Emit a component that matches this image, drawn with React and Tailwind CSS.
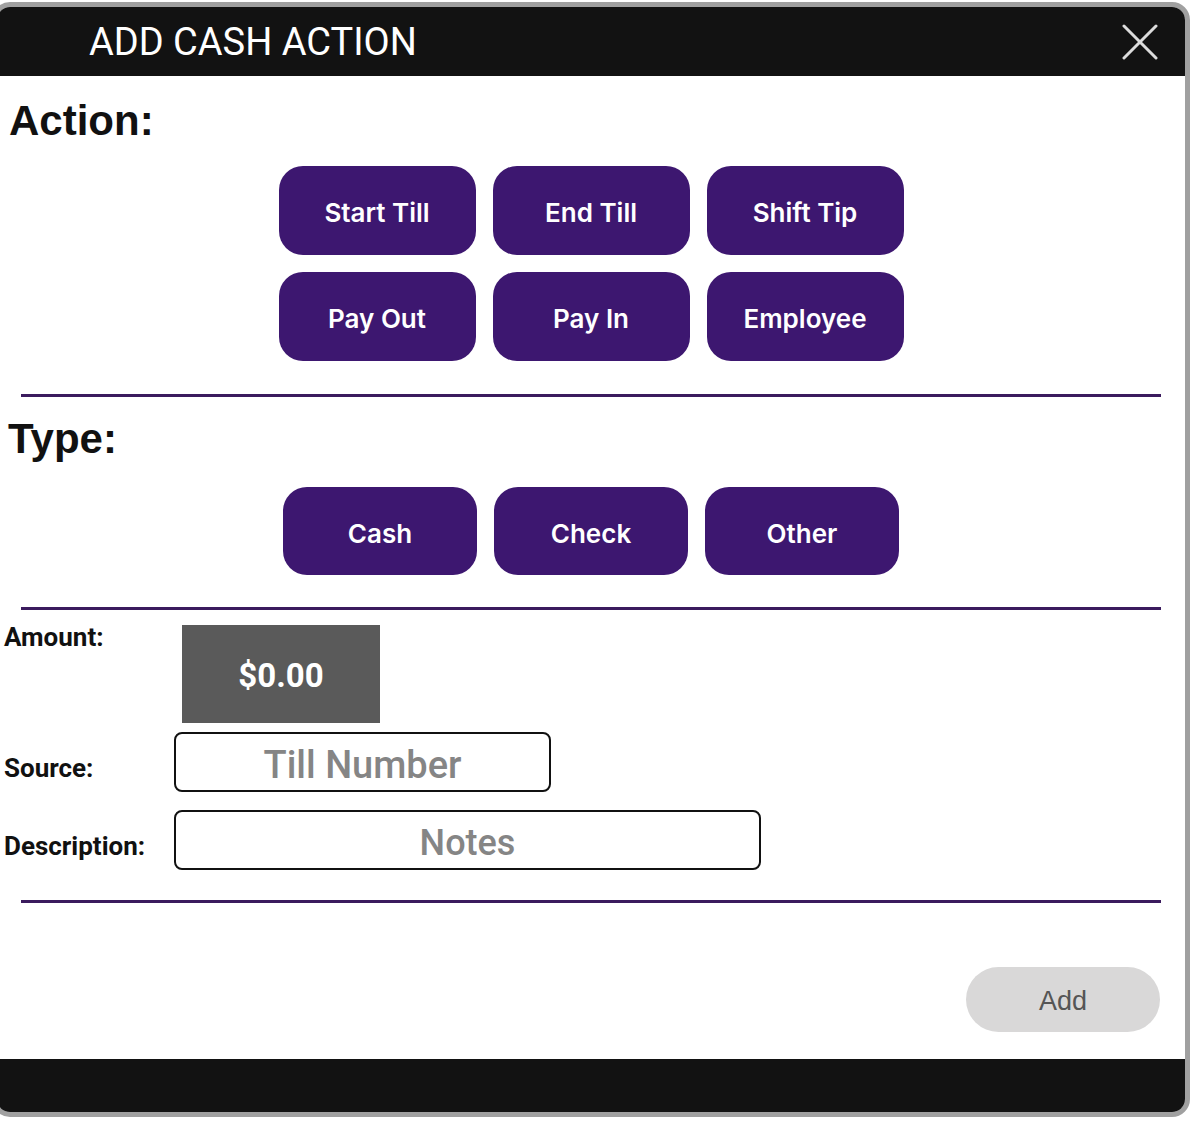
import { useState } from "react";

const ACTIONS = ["Start Till", "End Till", "Shift Tip", "Pay Out", "Pay In", "Employee"];
const TYPES = ["Cash", "Check", "Other"];

function Divider({ className = "" }) {
  return <div className={`mx-[24px] h-[3px] bg-[#3b1b5e] ${className}`} />;
}

function PurpleButton({ label, wide, onClick }) {
  return (
    <button
      onClick={onClick}
      className={`${wide ? "w-[197px] h-[89px]" : "w-[194px] h-[88px]"} pt-[4px] rounded-[24px] bg-[#3d1770] text-white text-[26px] font-semibold font-['Inter',sans-serif] flex items-center justify-center`}
    >
      {label}
    </button>
  );
}

export default function App() {
  const [action, setAction] = useState(null);
  const [type, setType] = useState(null);
  const [source, setSource] = useState("");
  const [notes, setNotes] = useState("");

  return (
    <div className="w-[1192px] h-[1129px] bg-white pt-[2px] overflow-hidden">
      <div className="ml-[-8px] w-[1198px] h-[1115px] border-[5px] border-[#a0a0a0] rounded-[18px] overflow-hidden flex flex-col bg-white">
        {/* header */}
        <div className="h-[69px] shrink-0 bg-[#121212] flex items-center justify-between pl-[92px] pr-[27px]">
          <h1 className="text-white text-[38px] leading-none font-['Roboto',sans-serif]">ADD CASH ACTION</h1>
          <button aria-label="close" className="w-[36px] h-[36px] flex items-center justify-center">
            <svg width="36" height="36" viewBox="0 0 36 36" fill="none">
              <path d="M2 2 L34 34 M34 2 L2 34" stroke="#dcdcdc" strokeWidth="3" strokeLinecap="round" />
            </svg>
          </button>
        </div>

        <div className="flex-1 flex flex-col">
          <h2 className="mt-[24px] pl-[12px] text-[42px] leading-[41px] font-bold text-[#111] font-['Liberation_Sans',Arial,sans-serif]">
            Action:
          </h2>
          <div className="mt-[25px] flex justify-center">
            <div className="grid grid-cols-3 gap-[17px]">
              {ACTIONS.map((a) => (
                <PurpleButton key={a} label={a} wide onClick={() => setAction(a)} />
              ))}
            </div>
          </div>

          <Divider className="mt-[33px]" />

          <h2 className="mt-[21px] pl-[11px] text-[42px] leading-[41px] font-bold text-[#111] font-['Liberation_Sans',Arial,sans-serif]">
            Type:
          </h2>
          <div className="mt-[28px] flex justify-center gap-[17px]">
            {TYPES.map((t) => (
              <PurpleButton key={t} label={t} onClick={() => setType(t)} />
            ))}
          </div>

          <Divider className="mt-[32px]" />

          <div className="font-['Roboto',sans-serif] text-[#111]">
            <div className="mt-[15px] pl-[7px] flex items-start">
              <span className="w-[178px] mt-[-1px] text-[26px] leading-[26px] font-bold">Amount:</span>
              <div className="w-[198px] h-[98px] pt-[4px] bg-[#5a5a5a] flex items-center justify-center text-white text-[33px] font-bold">
                $0.00
              </div>
            </div>

            <div className="mt-[9px] pl-[7px] flex items-center">
              <span className="w-[170px] pt-[12px] text-[26px] leading-[26px] font-bold">Source:</span>
              <input
                value={source}
                onChange={(e) => setSource(e.target.value)}
                placeholder="Till Number"
                className="w-[377px] h-[60px] pt-[6px] border-[2.5px] border-[#111] rounded-[8px] text-center text-[38px] font-medium text-[#333] placeholder:text-[#858585] outline-none"
              />
            </div>

            <div className="mt-[18px] pl-[7px] flex items-center">
              <span className="w-[170px] pt-[12px] text-[26px] leading-[26px] font-bold">Description:</span>
              <input
                value={notes}
                onChange={(e) => setNotes(e.target.value)}
                placeholder="Notes"
                className="w-[587px] h-[60px] pt-[6px] border-[2.5px] border-[#111] rounded-[8px] text-center text-[36px] font-medium text-[#333] placeholder:text-[#858585] outline-none"
              />
            </div>
          </div>

          <Divider className="mt-[30px]" />

          <div className="mt-[64px] pr-[25px] flex justify-end">
            <button
              disabled={!action || !type}
              className="w-[194px] h-[65px] pt-[4px] rounded-full bg-[#d9d8d8] text-[#555] text-[27px] font-['Liberation_Sans',Arial,sans-serif]"
            >
              Add
            </button>
          </div>
        </div>

        {/* footer */}
        <div className="h-[53px] shrink-0 bg-[#121212]" />
      </div>
    </div>
  );
}
